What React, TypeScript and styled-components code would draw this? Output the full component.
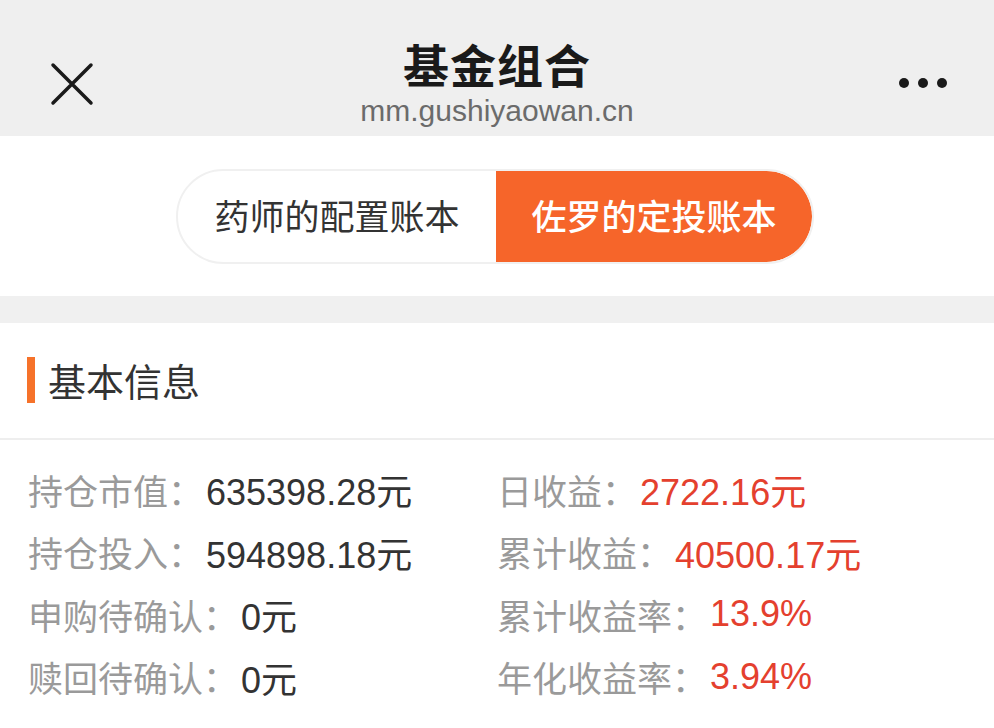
import React from 'react'
import styled, { createGlobalStyle } from 'styled-components'

const GlobalStyle = createGlobalStyle`
  html, body {
    margin: 0;
    padding: 0;
    background: #ffffff;
  }
  body {
    font-family: "Liberation Sans", "Noto Sans CJK SC", sans-serif;
    color: #333333;
  }
`

const Page = styled.div`
  width: 994px;
  min-height: 728px;
  background: #ffffff;
  overflow: hidden;
`

const NavBar = styled.header`
  height: 136px;
  background: #efefef;
  display: grid;
  grid-template-columns: 160px 1fr 160px;
  align-items: center;
`

const NavButton = styled.button<{ $align: 'left' | 'right' }>`
  border: 0;
  background: transparent;
  padding: 0;
  margin: 0;
  display: flex;
  justify-content: ${(p) => (p.$align === 'left' ? 'flex-start' : 'flex-end')};
  padding-left: ${(p) => (p.$align === 'left' ? '50px' : '0')};
  padding-right: ${(p) => (p.$align === 'right' ? '46px' : '0')};
  padding-top: ${(p) => (p.$align === 'left' ? '32px' : '30px')};
  cursor: pointer;
`

const TitleBlock = styled.div`
  align-self: start;
  display: flex;
  flex-direction: column;
  align-items: center;
  padding-top: 30px;
`

const Title = styled.h1`
  margin: 0;
  font-family: "Noto Sans CJK SC", sans-serif;
  font-size: 46px;
  font-weight: 700;
  line-height: normal;
  color: #1a1a1a;
  letter-spacing: 1px;
`

const SubTitle = styled.div`
  font-size: 30px;
  line-height: normal;
  color: #6b6b6b;
  margin-top: -2px;
`

const TabsArea = styled.section`
  height: 160px;
  display: flex;
  align-items: center;
  justify-content: center;
  padding-right: 4px;
  box-sizing: border-box;
`

const Segmented = styled.div`
  width: 638px;
  height: 95px;
  border-radius: 48px;
  border: 2px solid #f0f0f0;
  box-sizing: border-box;
  display: flex;
  overflow: hidden;
  background: #ffffff;
`

const Segment = styled.button<{ $active?: boolean }>`
  flex: ${(p) => (p.$active ? '0 0 316px' : '1 1 auto')};
  border: 0;
  margin: 0;
  padding: 0 0 4px;
  font-family: "Noto Sans CJK SC", sans-serif;
  font-size: 35px;
  font-weight: ${(p) => (p.$active ? 500 : 400)};
  color: ${(p) => (p.$active ? '#ffffff' : '#333333')};
  background: ${(p) => (p.$active ? '#f6652a' : 'transparent')};
  border-radius: ${(p) => (p.$active ? '0 48px 48px 0' : '0')};
  cursor: pointer;
`

const Spacer = styled.div`
  height: 27px;
  background: #f0f0f0;
`

const SectionHeader = styled.div`
  height: 117px;
  display: flex;
  align-items: center;
  gap: 13px;
  padding-left: 27px;
  padding-bottom: 2px;
  box-sizing: border-box;
  border-bottom: 2px solid #eeeeee;
`

const AccentBar = styled.span`
  width: 8px;
  height: 46px;
  background: #f6722a;
`

const SectionTitle = styled.h2`
  margin: 0;
  font-family: "Noto Sans CJK SC", sans-serif;
  font-size: 38px;
  font-weight: 400;
  color: #333333;
`

const InfoGrid = styled.div`
  display: grid;
  grid-template-columns: 469px 1fr;
  grid-auto-rows: 62.5px;
  padding: 18px 0 0 28px;
`

const InfoItem = styled.div`
  display: flex;
  align-items: center;
  font-size: 35px;
  white-space: nowrap;
`

const Label = styled.span`
  font-family: "Noto Sans CJK SC", sans-serif;
  color: #9a9a9a;
`

const Value = styled.span<{ $tone: 'dark' | 'red' }>`
  margin-left: 3px;
  color: ${(p) => (p.$tone === 'red' ? '#e4402e' : '#333333')};
  font-family: "Liberation Sans", "Noto Sans CJK SC", sans-serif;
  font-size: 36px;
`

const CloseIcon = () => (
  <svg width="44" height="44" viewBox="0 0 44 44">
    <path d="M3 3 L41 41 M41 3 L3 41" stroke="#1a1a1a" strokeWidth="3.5" strokeLinecap="round" />
  </svg>
)

const MoreIcon = () => (
  <svg width="50" height="12" viewBox="0 0 50 12">
    <circle cx="6" cy="6" r="5" fill="#1a1a1a" />
    <circle cx="25" cy="6" r="5" fill="#1a1a1a" />
    <circle cx="44" cy="6" r="5" fill="#1a1a1a" />
  </svg>
)

type Item = { label: string; value: string; tone: 'dark' | 'red' }

const items: Item[] = [
  { label: '持仓市值：', value: '635398.28元', tone: 'dark' },
  { label: '日收益：', value: '2722.16元', tone: 'red' },
  { label: '持仓投入：', value: '594898.18元', tone: 'dark' },
  { label: '累计收益：', value: '40500.17元', tone: 'red' },
  { label: '申购待确认：', value: '0元', tone: 'dark' },
  { label: '累计收益率：', value: '13.9%', tone: 'red' },
  { label: '赎回待确认：', value: '0元', tone: 'dark' },
  { label: '年化收益率：', value: '3.94%', tone: 'red' },
]

export default function App() {
  return (
    <Page>
      <GlobalStyle />
      <NavBar>
        <NavButton $align="left" aria-label="关闭">
          <CloseIcon />
        </NavButton>
        <TitleBlock>
          <Title>基金组合</Title>
          <SubTitle>mm.gushiyaowan.cn</SubTitle>
        </TitleBlock>
        <NavButton $align="right" aria-label="更多">
          <MoreIcon />
        </NavButton>
      </NavBar>

      <TabsArea>
        <Segmented>
          <Segment>药师的配置账本</Segment>
          <Segment $active>佐罗的定投账本</Segment>
        </Segmented>
      </TabsArea>

      <Spacer />

      <SectionHeader>
        <AccentBar />
        <SectionTitle>基本信息</SectionTitle>
      </SectionHeader>

      <InfoGrid>
        {items.map((it) => (
          <InfoItem key={it.label}>
            <Label>{it.label}</Label>
            <Value $tone={it.tone}>{it.value}</Value>
          </InfoItem>
        ))}
      </InfoGrid>
    </Page>
  )
}
